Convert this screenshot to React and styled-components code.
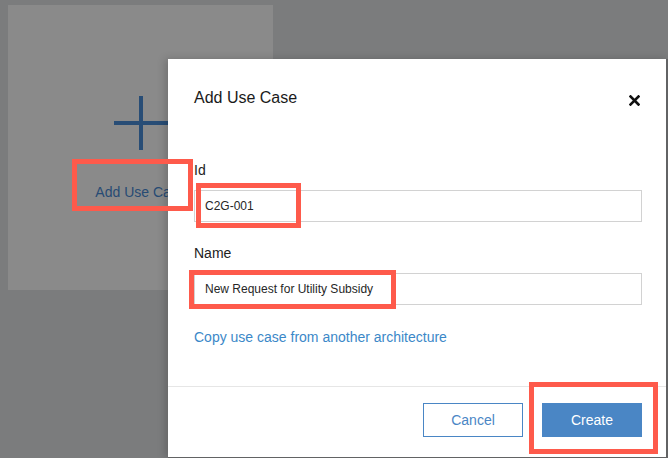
import React from "react";
import styled, { createGlobalStyle } from "styled-components";

const Global = createGlobalStyle`
  html, body { margin: 0; padding: 0; }
  body { font-family: "Liberation Sans", Arial, sans-serif; background: #7b7c7d; }
  * { box-sizing: border-box; }
`;

const Page = styled.div`
  position: relative;
  width: 668px;
  height: 458px;
  overflow: hidden;
  background: #7b7c7d;
  padding: 5px 0 0 8px;
`;

const Card = styled.div`
  width: 265px;
  height: 285px;
  background: #8a8a8a;
  display: flex;
  flex-direction: column;
  align-items: center;
  justify-content: center;
  gap: 33px;
`;

const CardLabel = styled.div`
  font-size: 14px;
  line-height: 16px;
  color: #274b74;
`;

const Modal = styled.div`
  position: absolute;
  left: 168px;
  top: 59px;
  width: 500px;
  height: 399px;
  background: #fff;
  border-right: 2px solid #626364;
  border-bottom: 1px solid #626364;
  box-shadow: -3px 0 8px rgba(0, 0, 0, 0.18);
  display: flex;
  flex-direction: column;
`;

const Header = styled.div`
  display: flex;
  align-items: center;
  justify-content: space-between;
  padding: 29px 26px 0 26px;
  height: 49px;
`;

const Title = styled.h2`
  margin: 0;
  font-size: 16px;
  line-height: 20px;
  font-weight: normal;
  color: #1a1a1a;
`;

const CloseBtn = styled.button`
  border: 0;
  background: none;
  padding: 0;
  width: 12px;
  height: 12px;
  display: flex;
  align-items: center;
  justify-content: center;
  margin-top: 4px;
  cursor: pointer;
`;

const Body = styled.div`
  display: flex;
  flex-direction: column;
  padding: 53px 24px 0 26px;
  height: 278px;
`;

const Field = styled.div`
  display: flex;
  flex-direction: column;
  margin-bottom: ${(p) => p.$mb || 0}px;
`;

const Label = styled.label`
  font-size: 14px;
  line-height: 18px;
  color: #222;
  margin-bottom: 11px;
`;

const Input = styled.div`
  height: 32px;
  border: 1px solid #d2d2d2;
  padding: 0 10px;
  display: flex;
  align-items: center;
  font-size: 12px;
  color: #262626;
`;

const Link = styled.a`
  font-size: 14px;
  line-height: 18px;
  color: #3b88c8;
  text-decoration: none;
`;

const Footer = styled.div`
  border-top: 1px solid #e6e6e6;
  display: flex;
  justify-content: flex-end;
  gap: 19px;
  padding: 16px 24px 0 0;
  flex: 1;
`;

const Button = styled.button`
  width: 100px;
  height: 34px;
  font-family: "Liberation Sans", Arial, sans-serif;
  font-size: 14px;
  border: 1px solid #4a86c5;
  background: ${(p) => (p.$primary ? "#4a86c5" : "#fff")};
  color: ${(p) => (p.$primary ? "#fff" : "#4a86c5")};
  padding: 0;
  cursor: pointer;
`;

const Mark = styled.div`
  position: absolute;
  border: 5px solid #fe5a4b;
  pointer-events: none;
`;

const Plus = () => (
  <svg width="56" height="56" viewBox="0 0 56 56">
    <path d="M28 1 V55 M1 28 H55" stroke="#284d76" strokeWidth="4" fill="none" />
  </svg>
);

const CloseIcon = () => (
  <svg width="11" height="11" viewBox="0 0 11 11">
    <path d="M1.5 1.5 L9.5 9.5 M9.5 1.5 L1.5 9.5" stroke="#111" strokeWidth="2.6" strokeLinecap="square" />
  </svg>
);

export default function App() {
  return (
    <>
      <Global />
      <Page>
        <Card>
          <Plus />
          <CardLabel>Add Use Case</CardLabel>
        </Card>
        <Modal>
          <Header>
            <Title>Add Use Case</Title>
            <CloseBtn aria-label="Close">
              <CloseIcon />
            </CloseBtn>
          </Header>
          <Body>
            <Field $mb={22}>
              <Label>Id</Label>
              <Input>C2G-001</Input>
            </Field>
            <Field $mb={23}>
              <Label>Name</Label>
              <Input>New Request for Utility Subsidy</Input>
            </Field>
            <Link href="#">Copy use case from another architecture</Link>
          </Body>
          <Footer>
            <Button>Cancel</Button>
            <Button $primary>Create</Button>
          </Footer>
        </Modal>
        <Mark style={{ left: 72, top: 159, width: 121, height: 52 }} />
        <Mark style={{ left: 196, top: 183, width: 105, height: 45 }} />
        <Mark style={{ left: 189, top: 270, width: 207, height: 39 }} />
        <Mark style={{ left: 529, top: 382, width: 129, height: 72 }} />
      </Page>
    </>
  );
}
